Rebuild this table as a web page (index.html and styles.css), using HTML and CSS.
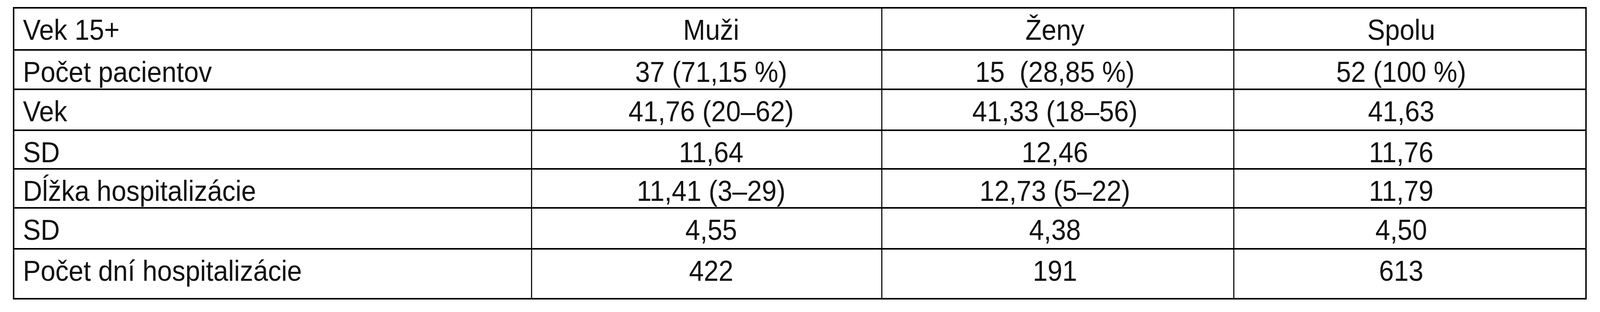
FILE: index.html
```html
<!DOCTYPE html>
<html lang="sk">
<head>
<meta charset="utf-8">
<title>Vek 15+</title>
<link rel="stylesheet" href="styles.css">
</head>
<body>
<div class="page">
<div class="tbl">
  <div class="cell c1">Vek 15+</div>
  <div class="cell c2">Muži</div>
  <div class="cell c3">Ženy</div>
  <div class="cell c4">Spolu</div>

  <div class="cell c1">Počet pacientov</div>
  <div class="cell c2">37 (71,15 %)</div>
  <div class="cell c3">15&nbsp; (28,85 %)</div>
  <div class="cell c4">52 (100 %)</div>

  <div class="cell c1">Vek</div>
  <div class="cell c2">41,76 (20–62)</div>
  <div class="cell c3">41,33 (18–56)</div>
  <div class="cell c4">41,63</div>

  <div class="cell c1">SD</div>
  <div class="cell c2">11,64</div>
  <div class="cell c3">12,46</div>
  <div class="cell c4">11,76</div>

  <div class="cell c1">Dĺžka hospitalizácie</div>
  <div class="cell c2">11,41 (3–29)</div>
  <div class="cell c3">12,73 (5–22)</div>
  <div class="cell c4">11,79</div>

  <div class="cell c1">SD</div>
  <div class="cell c2">4,55</div>
  <div class="cell c3">4,38</div>
  <div class="cell c4">4,50</div>

  <div class="cell c1">Počet dní hospitalizácie</div>
  <div class="cell c2">422</div>
  <div class="cell c3">191</div>
  <div class="cell c4">613</div>
</div>
</div>
</body>
</html>
```
FILE: styles.css
```css
html, body {
  margin: 0;
  padding: 0;
  background: #ffffff;
}

body {
  font-family: "Liberation Sans", Arial, sans-serif;
  color: #111111;
}

.page {
  width: 100%;
  overflow: hidden;
}

.tbl {
  display: grid;
  grid-template-columns: 1443px 976px 981px 982px;
  grid-template-rows: 108px 101px 105px 99px 100px 105px 128px;
  width: max-content;
  margin: 18px 0 0 33px;
  border-top: 4px solid #000;
  border-left: 4px solid #000;
  transform: scaleX(0.9186);
  transform-origin: 0 0;
}

.cell {
  box-sizing: border-box;
  border-bottom: 4px solid #000;
  border-right: 3px solid #000;
  font-size: 74px;
  line-height: 1.15;
  padding-top: 12px;
  white-space: nowrap;
}

.c1 {
  padding-left: 24px;
  text-align: left;
}

.c2 {
  text-align: center;
  padding-left: 25px;
}

.c3 {
  text-align: center;
  padding-right: 16px;
}

.c4 {
  text-align: center;
  padding-right: 48px;
  border-right-width: 4px;
}
```
